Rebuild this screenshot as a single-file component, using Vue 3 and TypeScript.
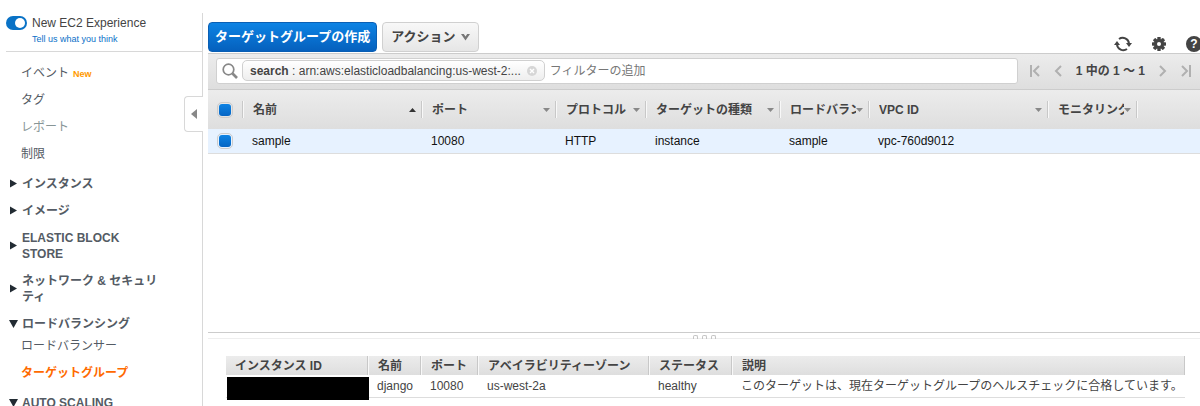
<script setup lang="ts">
import { ref } from 'vue'

interface NavLink { label: string; badge?: string; muted?: boolean; active?: boolean }
interface NavGroup { label: string; open: boolean; links: NavLink[] }
interface Column { label: string; key: string; sort?: 'asc' | 'none' }

const newExperience = ref(true)
const allSelected = ref(true)
const rowSelected = ref(true)
const filterText = ref('')

const topLinks: NavLink[] = [
  { label: 'イベント', badge: 'New' },
  { label: 'タグ' },
  { label: 'レポート', muted: true },
  { label: '制限' },
]

const groups = ref<NavGroup[]>([
  { label: 'インスタンス', open: false, links: [] },
  { label: 'イメージ', open: false, links: [] },
  { label: 'ELASTIC BLOCK STORE', open: false, links: [] },
  { label: 'ネットワーク & セキュリティ', open: false, links: [] },
  {
    label: 'ロードバランシング',
    open: true,
    links: [{ label: 'ロードバランサー' }, { label: 'ターゲットグループ', active: true }],
  },
  { label: 'AUTO SCALING', open: true, links: [] },
])

const columns: Column[] = [
  { label: '名前', key: 'name', sort: 'asc' },
  { label: 'ポート', key: 'port' },
  { label: 'プロトコル', key: 'protocol' },
  { label: 'ターゲットの種類', key: 'type' },
  { label: 'ロードバラン', key: 'lb' },
  { label: 'VPC ID', key: 'vpc' },
  { label: 'モニタリング', key: 'monitoring' },
]

const group: Record<string, string> = {
  name: 'sample',
  port: '10080',
  protocol: 'HTTP',
  type: 'instance',
  lb: 'sample',
  vpc: 'vpc-760d9012',
  monitoring: '',
}

const targetHeads = ['インスタンス ID', '名前', 'ポート', 'アベイラビリティーゾーン', 'ステータス', '説明']
const target = [
  'django',
  '10080',
  'us-west-2a',
  'healthy',
  'このターゲットは、現在ターゲットグループのヘルスチェックに合格しています。',
]
</script>

<template>
  <div class="console">
    <aside class="sidebar">
      <div class="experience">
        <label class="switch-label">
          <input v-model="newExperience" type="checkbox" class="switch" />
          <span>New EC2 Experience</span>
        </label>
        <a href="#" class="feedback">Tell us what you think</a>
      </div>
      <nav class="nav">
        <ul class="links">
          <li v-for="link in topLinks" :key="link.label">
            <a href="#" :class="{ muted: link.muted }">{{ link.label }}</a>
            <span v-if="link.badge" class="badge">{{ link.badge }}</span>
          </li>
        </ul>
        <section v-for="g in groups" :key="g.label" class="group">
          <button type="button" class="group-head" :class="{ open: g.open }" :aria-expanded="g.open" @click="g.open = !g.open">
            <svg class="caret" width="10" height="10" viewBox="0 0 10 10" aria-hidden="true">
              <path v-if="g.open" d="M0 1h9L4.500 9z" />
              <path v-else d="M1 0.500v8L8 4.500z" />
            </svg>
            <span>{{ g.label }}</span>
          </button>
          <ul v-if="g.open && g.links.length" class="links">
            <li v-for="link in g.links" :key="link.label">
              <a href="#" :class="{ active: link.active }">{{ link.label }}</a>
            </li>
          </ul>
        </section>
      </nav>
      <button type="button" class="collapse" aria-label="サイドバーを閉じる">
        <svg width="6" height="10" viewBox="0 0 6 10" aria-hidden="true"><path d="M6 0v10L0 5z" fill="#888" /></svg>
      </button>
    </aside>

    <main class="main">
      <header class="actions">
        <button type="button" class="btn primary">ターゲットグループの作成</button>
        <button type="button" class="btn secondary">
          アクション
          <svg width="9" height="8" viewBox="0 0 9 8" aria-hidden="true"><path d="M0 1h2.800L4.500 3.400 6.200 1H9L4.500 7.500z" fill="#777" /></svg>
        </button>
        <div class="tools">
          <button type="button" aria-label="更新">
            <svg width="18" height="16" viewBox="0 0 18 16" aria-hidden="true">
              <path d="M5 3A6.300 6.300 0 0 1 15 7.500M13 13A6.300 6.300 0 0 1 3 8.500" fill="none" stroke="#444" stroke-width="2" />
              <path d="M12 7h6l-3 4zM0 9h6L3 5z" fill="#444" />
            </svg>
          </button>
          <button type="button" aria-label="設定">
            <svg width="14" height="14" viewBox="0 0 14 14" aria-hidden="true">
              <g fill="#444">
                <rect v-for="a in [0, 45, 90, 135]" :key="a" x="5.300" y="0" width="3.400" height="14" rx="0.600" :transform="`rotate(${a} 7 7)`" />
                <circle cx="7" cy="7" r="5" />
              </g>
              <circle cx="7" cy="7" r="2" fill="#fff" />
            </svg>
          </button>
          <button type="button" class="help" aria-label="ヘルプ">?</button>
        </div>
      </header>

      <div class="filterbar">
        <div class="search">
          <svg class="lens" width="16" height="16" viewBox="0 0 16 16" aria-hidden="true">
            <circle cx="6.500" cy="6.500" r="5.300" fill="none" stroke="#888" stroke-width="1.700" />
            <path d="M10.500 10.500L15 15" stroke="#888" stroke-width="2.600" />
          </svg>
          <span class="chip">
            <span><b>search</b> : arn:aws:elasticloadbalancing:us-west-2:...</span>
            <button type="button" aria-label="フィルターを削除">
              <svg width="10" height="10" viewBox="0 0 10 10" aria-hidden="true">
                <circle cx="5" cy="5" r="5" fill="#d6d6d6" />
                <path d="M3 3l4 4M7 3L3 7" stroke="#fff" stroke-width="1.400" />
              </svg>
            </button>
          </span>
          <input v-model="filterText" type="text" placeholder="フィルターの追加" aria-label="フィルターの追加" />
        </div>
        <div class="pager">
          <button type="button" aria-label="最初のページ"><svg width="10" height="12" viewBox="0 0 10 12"><path d="M1 0v12M9 1L4 6l5 5" /></svg></button>
          <button type="button" aria-label="前のページ"><svg width="8" height="12" viewBox="0 0 8 12"><path d="M7 1L2 6l5 5" /></svg></button>
          <span class="range">1 中の 1 ～ 1</span>
          <button type="button" aria-label="次のページ"><svg width="8" height="12" viewBox="0 0 8 12"><path d="M1 1l5 5-5 5" /></svg></button>
          <button type="button" aria-label="最後のページ"><svg width="10" height="12" viewBox="0 0 10 12"><path d="M9 0v12M1 1l5 5-5 5" /></svg></button>
        </div>
      </div>

      <div class="list">
        <table class="grid">
          <colgroup>
            <col class="c-check" />
            <col v-for="c in columns" :key="c.key" :class="'c-' + c.key" />
            <col />
          </colgroup>
          <thead>
            <tr>
              <th><div class="head"><input v-model="allSelected" type="checkbox" class="check" aria-label="すべて選択" /></div></th>
              <th v-for="c in columns" :key="c.key">
                <div class="head">
                  <span class="head-text">{{ c.label }}</span>
                  <svg width="7" height="4" viewBox="0 0 7 4" aria-hidden="true">
                    <path v-if="c.sort === 'asc'" d="M0 4h7L3.500 0z" fill="#333" />
                    <path v-else d="M0 0h7L3.500 4z" fill="#888" />
                  </svg>
                </div>
              </th>
              <th></th>
            </tr>
          </thead>
          <tbody>
            <tr>
              <td><input v-model="rowSelected" type="checkbox" class="check" aria-label="sample を選択" /></td>
              <td v-for="c in columns" :key="c.key">{{ group[c.key] }}</td>
              <td></td>
            </tr>
          </tbody>
        </table>
      </div>

      <div class="splitter"><i></i><i></i><i></i></div>

      <section class="details">
        <table class="targets">
          <colgroup>
            <col class="t-id" /><col class="t-name" /><col class="t-port" /><col class="t-zone" /><col class="t-status" /><col />
          </colgroup>
          <thead>
            <tr><th v-for="h in targetHeads" :key="h">{{ h }}</th></tr>
          </thead>
          <tbody>
            <tr>
              <td class="redacted"><span></span></td>
              <td v-for="v in target" :key="v">{{ v }}</td>
            </tr>
          </tbody>
        </table>
      </section>
    </main>
  </div>
</template>

<style>
body {
  margin: 0;
  background: #fff;
}
</style>

<style scoped>
.console {
  display: flex;
  height: 100vh;
  overflow: hidden;
  color: #444;
  font: 12px/16px "Liberation Sans", "Noto Sans CJK JP", sans-serif;
}
.console * {
  box-sizing: border-box;
}
button {
  padding: 0;
  border: 0;
  background: none;
  color: inherit;
  font: inherit;
  cursor: pointer;
}
button svg {
  display: block;
}
a {
  text-decoration: none;
}

.sidebar {
  position: relative;
  flex: 0 0 203px;
  margin-top: 13px;
  border-right: 1px solid #d8d8d8;
}
.experience {
  margin-left: 6px;
  height: 39px;
  padding-top: 2px;
  border-bottom: 1px solid #d8d8d8;
}
.switch-label {
  display: flex;
  align-items: center;
  gap: 5px;
}
.switch {
  appearance: none;
  width: 21px;
  height: 14px;
  margin: 0;
  border-radius: 7px;
  background: #0972c6;
  position: relative;
}
.switch::after {
  content: "";
  position: absolute;
  top: 2px;
  left: 2px;
  width: 10px;
  height: 10px;
  border-radius: 50%;
  background: #fff;
}
.switch:checked::after {
  left: 9px;
}
.feedback {
  display: block;
  margin-left: 26px;
  color: #0a70c8;
  font-size: 9px;
}
.nav {
  padding-top: 7px;
}
.links {
  margin: 0 0 3px;
  padding: 0 0 0 21px;
  list-style: none;
}
.links li {
  height: 27px;
  display: flex;
  align-items: center;
  gap: 4px;
}
.links a {
  color: #545b64;
}
.links .muted {
  color: #879596;
}
.links .active {
  color: #ff6a00;
  font-weight: bold;
}
.badge {
  color: #ff9900;
  font-size: 9px;
  font-weight: bold;
  padding-top: 2px;
}
.group-head {
  display: flex;
  align-items: center;
  gap: 3px;
  width: 100%;
  padding: 6px 42px 5px 9px;
  color: #545b64;
  font-weight: bold;
  text-align: left;
}
.group-head.open {
  padding-bottom: 0;
}
.caret {
  flex: none;
  fill: #222b33;
}
.collapse {
  position: absolute;
  top: 83px;
  right: -1px;
  width: 19px;
  height: 36px;
  display: flex;
  align-items: center;
  justify-content: center;
  border: 1px solid #d8d8d8;
  border-right: 0;
  border-radius: 4px 0 0 4px;
  background: #fff;
}

.main {
  flex: 1;
  min-width: 0;
  display: flex;
  flex-direction: column;
  margin-left: 5px;
}
.actions {
  display: flex;
  gap: 5px;
  padding-top: 22px;
}
.btn {
  display: flex;
  align-items: center;
  height: 30px;
  padding: 0 6px;
  border: 1px solid #d0d0d0;
  border-radius: 4px;
  background: linear-gradient(#f8f8f8, #e6e6e6);
  font-size: 13px;
  font-weight: bold;
  white-space: nowrap;
}
.btn.primary {
  border-color: #0a5fb4;
  background: linear-gradient(#0d83e4, #0560bd);
  color: #fff;
}
.btn.secondary {
  gap: 5px;
  padding: 0 8px;
}
.tools {
  display: flex;
  align-items: center;
  gap: 20px;
  height: 16px;
  margin: 14px -2px 0 auto;
}
.help {
  width: 16px;
  height: 16px;
  border-radius: 50%;
  background: #444;
  color: #fff;
  font-weight: bold;
  text-align: center;
}
.filterbar {
  display: flex;
  align-items: center;
  gap: 12px;
  height: 37px;
  margin-top: 1px;
  padding: 0 9px 2px 8px;
  border: 1px solid #ccc;
  border-width: 1px 0;
  background: linear-gradient(#ececec, #dedede);
}
.search {
  flex: 1;
  min-width: 0;
  display: flex;
  align-items: center;
  height: 26px;
  padding: 0 5px;
  border: 1px solid #d0d0d0;
  border-radius: 3px;
  background: #fff;
}
.lens {
  flex: none;
}
.chip {
  flex: none;
  display: flex;
  align-items: center;
  gap: 6px;
  height: 21px;
  margin-left: 4px;
  padding: 0 7px;
  border: 1px solid #d0d0d0;
  border-radius: 5px;
  background: linear-gradient(#fff, #eee);
}
.search input {
  flex: 1;
  min-width: 0;
  padding: 0 0 0 5px;
  border: 0;
  outline: 0;
  background: none;
  font: inherit;
}
.search input::placeholder {
  color: #777;
}
.pager {
  display: flex;
  align-items: center;
  gap: 14px;
}
.pager path {
  fill: none;
  stroke: #b0b0b0;
  stroke-width: 2;
}
.range {
  font-weight: bold;
  white-space: nowrap;
}

.list {
  flex: 1;
  min-height: 0;
  overflow: hidden;
}
table {
  width: 100%;
  border-collapse: separate;
  border-spacing: 0;
  table-layout: fixed;
}
th,
td {
  padding: 0;
  text-align: left;
  white-space: nowrap;
}
.c-check { width: 35px; }
.c-name { width: 179px; }
.c-port { width: 134px; }
.c-protocol { width: 90px; }
.c-type { width: 134px; }
.c-lb { width: 89px; }
.c-vpc { width: 179px; }
.c-monitoring { width: 89px; }
.grid thead tr {
  height: 39px;
  background: linear-gradient(#ececec, #dedede);
}
.head {
  display: flex;
  align-items: center;
  height: 17px;
  padding: 0 5px 0 10px;
  border-right: 1px solid #c8c8c8;
  box-shadow: 1px 0 #f8f8f8;
}
.grid th:first-child .head {
  padding: 0 0 0 9px;
}
.head-text {
  flex: 1;
  min-width: 0;
  overflow: hidden;
}
.head svg {
  flex: none;
}
.grid td {
  height: 25px;
  padding-left: 9px;
  border-bottom: 1px solid #ddd;
  background: #e7f2ff;
  color: #111;
}
.check {
  display: block;
  appearance: none;
  width: 16px;
  height: 16px;
  margin: 0;
  padding: 1px;
  border: 1px solid #ccc;
  border-radius: 5px;
  background: #f4f4f4;
}
.check:checked {
  background: linear-gradient(#0d83e4, #0565c4) content-box #f4f4f4;
}

.splitter {
  display: flex;
  justify-content: center;
  gap: 4px;
  height: 7px;
  padding-top: 2px;
  border-top: 1px solid #ccc;
  border-bottom: 1px solid #eee;
}
.splitter i {
  width: 5px;
  height: 4px;
  border: 1px solid #c4c4c4;
  border-bottom: 0;
  border-radius: 2px 2px 0 0;
}
.details {
  height: 67px;
  padding: 17px 15px 0 18px;
}
.t-id { width: 142px; }
.t-name { width: 53px; }
.t-port { width: 57px; }
.t-zone { width: 171px; }
.t-status { width: 83px; }
.targets th {
  height: 19px;
  padding-left: 9px;
  border-right: 1px solid #c8c8c8;
  background: linear-gradient(#ececec, #dedede);
}
.targets th + th {
  border-left: 1px solid #f8f8f8;
}
.targets td {
  height: 23px;
  padding-left: 9px;
  border-bottom: 1px solid #ddd;
}
.targets .redacted {
  position: relative;
}
.redacted span {
  position: absolute;
  top: 2px;
  left: 1px;
  width: 100%;
  height: 23px;
  background: #000;
}
</style>
